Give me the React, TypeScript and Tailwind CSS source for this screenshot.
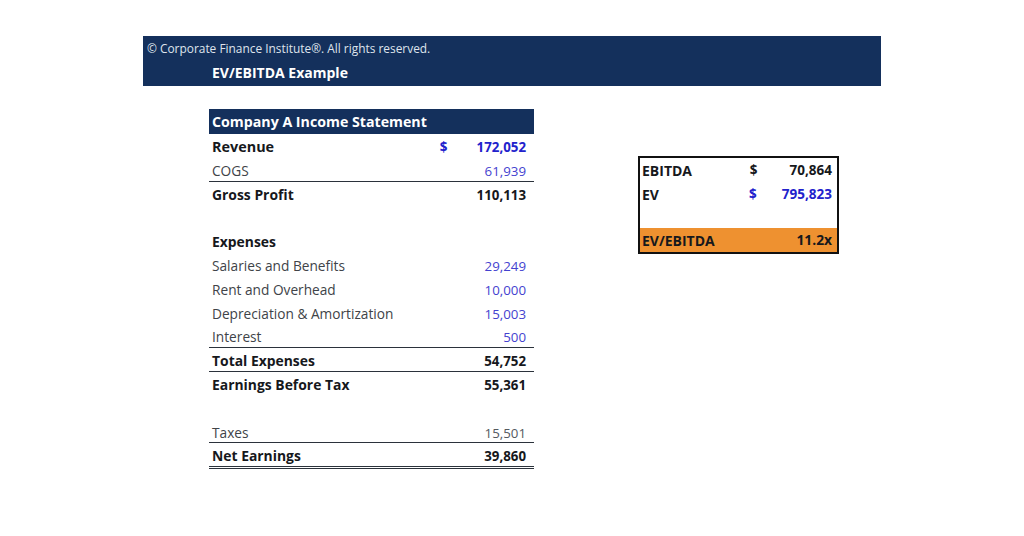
const statement = [
  { label: 'Revenue', value: '172,052', bold: true, blue: true, dollar: true },
  { label: 'COGS', value: '61,939', blue: true, line: true },
  { label: 'Gross Profit', value: '110,113', bold: true },
  { label: '', value: '' },
  { label: 'Expenses', value: '', bold: true },
  { label: 'Salaries and Benefits', value: '29,249', blue: true },
  { label: 'Rent and Overhead', value: '10,000', blue: true },
  { label: 'Depreciation & Amortization', value: '15,003', blue: true },
  { label: 'Interest', value: '500', blue: true, line: true },
  { label: 'Total Expenses', value: '54,752', bold: true, line: true },
  { label: 'Earnings Before Tax', value: '55,361', bold: true },
  { label: '', value: '' },
  { label: 'Taxes', value: '15,501', line: true },
  { label: 'Net Earnings', value: '39,860', bold: true, double: true },
];

type Row = {
  label: string;
  value: string;
  bold?: boolean;
  blue?: boolean;
  dollar?: boolean;
  line?: boolean;
  double?: boolean;
};

function StatementRow({ row }: { row: Row }) {
  let border = 'h-[23.8px] border-b border-transparent';
  if (row.line) border = 'h-[23.8px] border-b border-[#2b323b]';
  if (row.double) border = 'h-[26px] border-b-[3px] border-double border-[#2b323b]';

  let valueColor = row.bold ? 'text-[#16181c]' : 'text-[#55595f]';
  if (row.blue) valueColor = row.bold ? 'text-[#2222cc]' : 'text-[#4442cf]';

  let labelSize = row.bold ? 'text-[13.9px] font-bold text-[#16181c]' : 'text-[13.7px] text-[#404348]';
  if (row.dollar) labelSize = 'text-[14.4px] font-bold text-[#16181c]';

  return (
    <div className={`flex items-baseline pl-[3px] pr-[8px] pt-[3px] leading-[20px] ${border}`}>
      <span className={`flex-1 ${labelSize}`}>{row.label}</span>
      {row.dollar && <span className="mr-[29px] font-bold text-[#2222cc]">$</span>}
      <span className={`text-[13.3px] ${valueColor} ${row.bold ? 'font-bold' : ''}`}>{row.value}</span>
    </div>
  );
}

export default function App() {
  return (
    <div className="h-[536px] w-[1024px] overflow-hidden bg-white pl-[143px] pt-9 font-['Open_Sans',sans-serif] text-[13.5px]">
      <div className="h-[50px] w-[738px] bg-[#14305c] text-white">
        <p className="pl-1 pt-[4px] text-[11.9px] leading-[17px] text-[#dfe4ec]">© Corporate Finance Institute®. All rights reserved.</p>
        <p className="pl-[69px] pt-[6px] text-[14px] font-bold leading-[19px]">EV/EBITDA Example</p>
      </div>

      <div className="flex items-start pl-[66px] pt-[23px]">
        <div className="w-[325px]">
          <div className="flex h-[25px] items-center bg-[#14305c] pl-[3px] text-[14.2px] font-bold text-white">
            Company A Income Statement
          </div>
          {statement.map((row, i) => (
            <StatementRow key={i} row={row} />
          ))}
        </div>

        <div className="ml-[104px] mt-[47px] w-[201px] border-2 border-[#111] font-bold text-[#16181c]">
          <div className="flex h-[24px] items-center pl-[2px] pr-[5px]">
            <span className="flex-1 text-[14px]">EBITDA</span>
            <span className="mr-[32px]">$</span>
            <span>70,864</span>
          </div>
          <div className="flex h-[24px] items-center pl-[2px] pr-[5px]">
            <span className="flex-1 text-[14px]">EV</span>
            <span className="mr-[25px] text-[#2222cc]">$</span>
            <span className="text-[#2222cc]">795,823</span>
          </div>
          <div className="h-[22px]" />
          <div className="flex h-[24px] items-center justify-between bg-[#ee9130] pl-[2px] pr-[5px]">
            <span className="text-[14px]">EV/EBITDA</span>
            <span className="text-[13.8px]">11.2x</span>
          </div>
        </div>
      </div>
    </div>
  );
}
